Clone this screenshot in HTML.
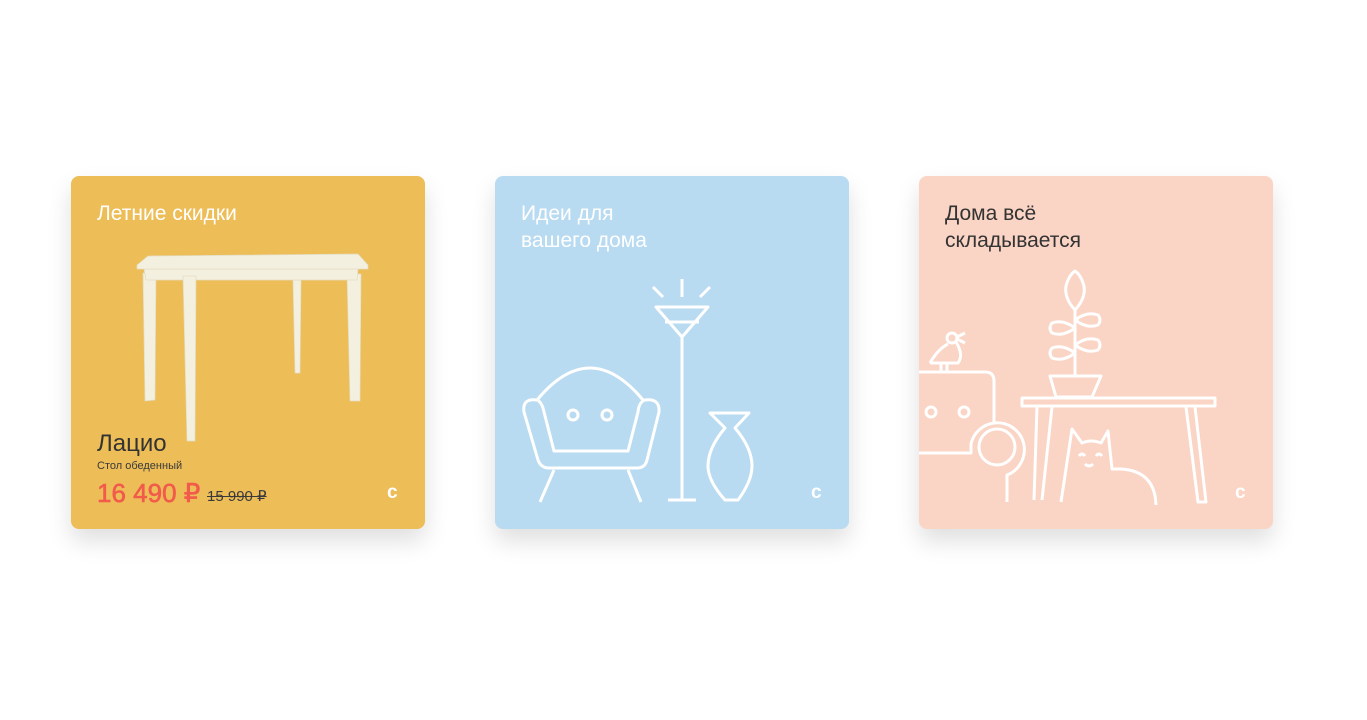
<!DOCTYPE html>
<html><head><meta charset="utf-8"><style>
*{margin:0;padding:0;box-sizing:border-box}
body{width:1367px;height:720px;background:#fff;position:relative;overflow:hidden;font-family:"Liberation Sans",sans-serif}
.card{position:absolute;top:176px;width:354px;height:353px;border-radius:8px;overflow:hidden;box-shadow:0 12px 24px rgba(0,0,0,0.13)}
.t{position:absolute;left:26px;top:24px;font-size:21px;line-height:27px;color:#fff}
.c{position:absolute;left:316px;top:306px;font-size:19px;font-weight:bold;color:#fff}
svg{position:absolute;left:0;top:0}
</style></head><body>
<div class="card" style="left:71px;background:#EDBD57">
<svg width="354" height="353" viewBox="0 0 354 353">
<g fill="#F4F0DF" stroke="#E2DCC3" stroke-width="0.7">
<polygon points="72,97 85,97 84,224 74,225"/>
<polygon points="222,104 230,104 229,197 224,197"/>
<polygon points="276,98 290,98 289,225 279,225"/>
<polygon points="73,93 287,93 286,104 75,104"/>
<polygon points="112,100 125,100 124,265 116,265"/>
<polygon points="66,89 77,80 287,78 297,89 297,93 66,93"/>
</g>
</svg>
<div class="t">Летние скидки</div>
<div style="position:absolute;left:26px;top:254px;font-size:24px;color:#333">Лацио</div>
<div style="position:absolute;left:26px;top:284px;font-size:11px;color:#3a3a3a">Стол обеденный</div>
<div style="position:absolute;left:26px;top:302px;font-size:26px;color:#F25A4B;-webkit-text-stroke:0.6px #F25A4B">16 490 ₽</div>
<div style="position:absolute;left:136px;top:311px;font-size:15px;color:#3a3a3a;text-decoration:line-through">15 990 ₽</div>
<div class="c">с</div>
</div>

<div class="card" style="left:495px;background:#B9DBF1">
<div class="t">Идеи для<br>вашего дома</div>
<svg width="354" height="353" viewBox="0 0 354 353" fill="none" stroke="#fff" stroke-width="3" stroke-linejoin="round">
<path d="M42,224 Q95,160 148,224"/>
<path d="M42,224 Q27,222 29,236 L43,284 Q46,292 54,292 L142,292 Q150,292 152,284 L164,236 Q165,222 150,224 Q144,226 143,236 L133,275 L59,275 L49,236 Q47,226 42,224 Z"/>
<path d="M59,294 L45,326 M133,294 L146,326"/>
<circle cx="78" cy="239" r="5"/><circle cx="112" cy="239" r="5"/>
<path d="M187,161 L187,324 M173,324 L201,324"/>
<path d="M161,131 L213,131 L187,161 Z M170,146 L204,146"/>
<path d="M187,103 L187,121 M158,111 L168,121 M215,111 L205,121"/>
<path d="M215,237 L254,237 L240,252 Q257,272 257,290 Q257,305 243,324 L230,324 Q213,305 213,290 Q213,272 230,252 Z"/>
</svg>
<div class="c">с</div>
</div>

<div class="card" style="left:919px;background:#FAD4C4">
<div class="t" style="color:#333">Дома всё<br>складывается</div>
<svg width="354" height="353" viewBox="0 0 354 353" fill="none" stroke="#fff" stroke-width="3" stroke-linejoin="round">
<path d="M0,196 L66,196 Q75,196 75,205 L75,246"/>
<path d="M0,277 L52,277 L52,268 A27,27 0 1 1 88,299 L88,326"/>
<circle cx="78" cy="271" r="18"/>
<circle cx="12" cy="236" r="5"/><circle cx="45" cy="236" r="5"/>
<path d="M11,187 Q19,173 29,168 M37,166 Q45,179 39,187 L11,187 M38,161 L46,157 M38,163 L46,167 M22,187 L22,196 M28,187 L28,196"/>
<circle cx="33" cy="162" r="5"/>
<rect x="103" y="222" width="193" height="8"/>
<path d="M118,231 L115,324 M133,231 L123,324 M267,231 L279,326 L287,326 L276,231"/>
<path d="M131,200 L182,200 L173,221 L137,221 Z M156,200 L156,134"/>
<path d="M156,134 Q145,122 147,110 Q150,99 156,95 Q162,99 165,110 Q167,122 156,134 Z"/>
<path d="M156,152 Q144,143 133,147 Q129,152 133,157 Q144,161 156,152 Z"/>
<path d="M156,144 Q168,135 179,139 Q183,144 179,149 Q168,153 156,144 Z"/>
<path d="M156,177 Q144,168 133,172 Q129,177 133,182 Q144,186 156,177 Z"/>
<path d="M156,169 Q168,160 179,164 Q183,169 179,174 Q168,178 156,169 Z"/>
<path d="M142,326 L153,253 L163,267 Q172,263 182,267 L189,255 L193,293 L202,293 Q236,295 237,329"/>
<path d="M160,280 Q163,276 166,280 M177,280 Q180,276 183,280 M166,288 Q170,292 174,288"/>
</svg>
<div class="c">с</div>
</div>
</body></html>
